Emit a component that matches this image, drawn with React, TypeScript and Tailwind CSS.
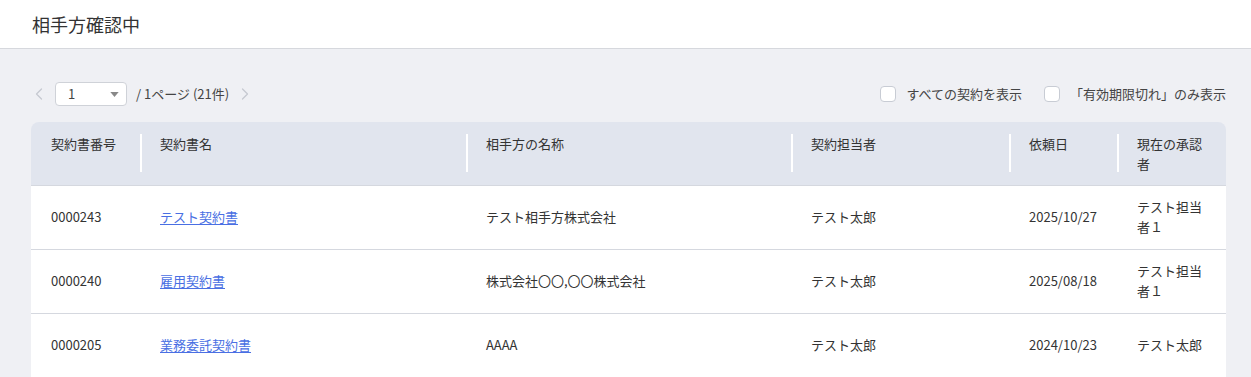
import { ChevronLeft, ChevronRight } from "lucide-react";

const rows = [
  { no: "0000243", name: "テスト契約書", party: "テスト相手方株式会社", owner: "テスト太郎", date: "2025/10/27", approver: "テスト担当者１" },
  { no: "0000240", name: "雇用契約書", party: "株式会社〇〇,〇〇株式会社", owner: "テスト太郎", date: "2025/08/18", approver: "テスト担当者１" },
  { no: "0000205", name: "業務委託契約書", party: "AAAA", owner: "テスト太郎", date: "2024/10/23", approver: "テスト太郎" },
];

const columns = [
  { label: "契約書番号", width: "w-[109px]" },
  { label: "契約書名", width: "w-[326px]" },
  { label: "相手方の名称", width: "w-[325px]" },
  { label: "契約担当者", width: "w-[218px]" },
  { label: "依頼日", width: "w-[108px]" },
  { label: "現在の承認者", width: "w-[109px]" },
];

function Checkbox({ label }: { label: string }) {
  return (
    <label className="flex items-center gap-[10px] text-[13px] text-[#444]">
      <span className="h-4 w-4 rounded-[4px] border border-[#c8ccd4] bg-white" />
      {label}
    </label>
  );
}

export default function App() {
  return (
    <div className="min-h-[377px] bg-[#eff0f4] font-['Noto_Sans_CJK_JP','Noto_Sans',sans-serif] text-[#333]">
      <header className="flex h-[49px] items-center border-b border-[#d6d8dd] bg-white px-8">
        <h1 className="text-[18px] leading-none text-[#333]">相手方確認中</h1>
      </header>

      <main className="pl-[31px] pr-[25px] pt-[33px]">
        <div className="flex h-6 items-center justify-between">
          <div className="flex items-center text-[13px] text-[#444]">
            <ChevronLeft className="-ml-[2px] h-5 w-5 text-[#c6c9d0]" strokeWidth={1.5} />
            <div className="ml-[6px] flex h-6 w-[72px] items-center justify-between rounded-[4px] border border-[#cfd2d8] bg-white pl-3 pr-[7px]">
              <span>1</span>
              <svg width="9" height="5" viewBox="0 0 10 6" className="text-[#888]">
                <path d="M0 0h10L5 6z" fill="currentColor" />
              </svg>
            </div>
            <span className="ml-[9px]">/ 1ページ (21件)</span>
            <ChevronRight className="ml-[6px] h-5 w-5 text-[#c6c9d0]" strokeWidth={1.5} />
          </div>
          <div className="flex items-center gap-[22px]">
            <Checkbox label="すべての契約を表示" />
            <Checkbox label="「有効期限切れ」のみ表示" />
          </div>
        </div>

        <table className="mt-[16px] w-full table-fixed border-collapse overflow-hidden rounded-t-[8px] text-[13px]">
          <thead>
            <tr className="h-[63px] border-b border-[#d5d8df] bg-[#e1e5ee]">
              {columns.map((c, i) => (
                <th
                  key={c.label}
                  className={`${c.width} relative pb-[10px] pl-5 pr-3 pt-[12px] text-left align-top font-normal leading-[20px] text-[#333]`}
                >
                  {i > 0 && <span className="absolute left-0 top-[12px] h-[38px] w-[2px] bg-white" />}
                  {c.label}
                </th>
              ))}
            </tr>
          </thead>
          <tbody className="bg-white">
            {rows.map((r) => (
              <tr key={r.no} className="h-[64px] border-b border-[#d5d8df]">
                <td className="pl-5 leading-[20px]">{r.no}</td>
                <td className="pl-5 leading-[20px]">
                  <a href="#" className="text-[#4a6fe3] underline underline-offset-2">
                    {r.name}
                  </a>
                </td>
                <td className="pl-5 leading-[20px]">{r.party}</td>
                <td className="pl-5 leading-[20px]">{r.owner}</td>
                <td className="pl-5 leading-[20px]">{r.date}</td>
                <td className="pl-5 pr-3 leading-[20px]">{r.approver}</td>
              </tr>
            ))}
          </tbody>
        </table>
      </main>
    </div>
  );
}
